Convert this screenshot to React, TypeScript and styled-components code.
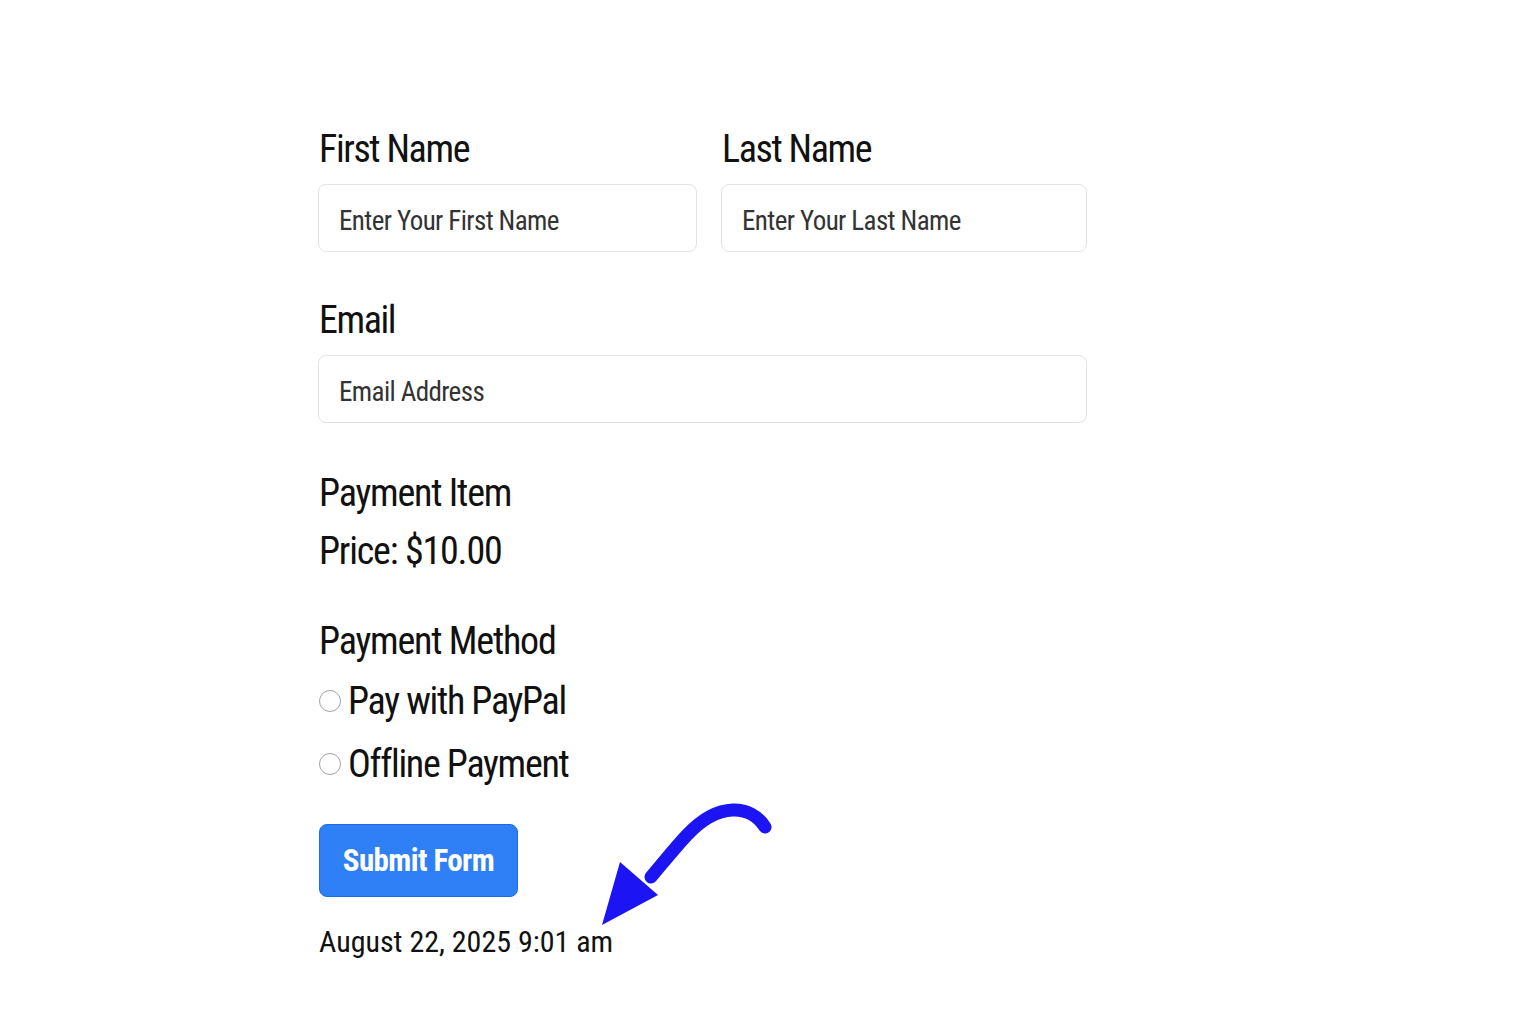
import React from "react";
import styled, { createGlobalStyle } from "styled-components";

const GlobalStyle = createGlobalStyle`
  html, body {
    margin: 0;
    padding: 0;
    background: #ffffff;
  }
  body {
    font-family: Roboto, "Liberation Sans", sans-serif;
    font-stretch: 75%;
    color: #111111;
  }
`;

const App = () => {
  return (
    <>
      <GlobalStyle />
      <Page>
        <Form onSubmit={(e) => e.preventDefault()}>
          <NameRow>
            <Field>
              <Label htmlFor="first">First Name</Label>
              <Input id="first" placeholder="Enter Your First Name" />
            </Field>
            <Field>
              <Label htmlFor="last">Last Name</Label>
              <Input id="last" placeholder="Enter Your Last Name" />
            </Field>
          </NameRow>
          <Field>
            <Label htmlFor="email">Email</Label>
            <Input id="email" placeholder="Email Address" />
          </Field>
          <ItemBlock>
            <Heading>Payment Item</Heading>
            <Heading>Price: $10.00</Heading>
          </ItemBlock>
          <MethodBlock>
            <Heading>Payment Method</Heading>
            <RadioList>
              <RadioRow>
                <Radio type="radio" name="method" />
                <span>Pay with PayPal</span>
              </RadioRow>
              <RadioRow>
                <Radio type="radio" name="method" />
                <span>Offline Payment</span>
              </RadioRow>
            </RadioList>
          </MethodBlock>
          <SubmitButton type="submit">Submit Form</SubmitButton>
          <Stamp>
            August 22, 2025 9:01 am
            <Arrow viewBox="0 0 180 130" width="180" height="130">
              <path
                d="M164 32 C150 10, 118 6, 86 40 C72 55, 62 68, 50 82"
                fill="none"
                stroke="#1c14f2"
                strokeWidth="13"
                strokeLinecap="round"
              />
              <polygon points="19,67 57,100 1,130" fill="#1c14f2" />
            </Arrow>
          </Stamp>
        </Form>
      </Page>
    </>
  );
};

const Page = styled.div`
  width: 1536px;
  min-height: 1024px;
  padding: 127px 0 0 318px;
  box-sizing: border-box;
`;

const Form = styled.form`
  width: 769px;
  display: flex;
  flex-direction: column;
`;

const NameRow = styled.div`
  display: grid;
  grid-template-columns: 379px 366px;
  column-gap: 24px;
  margin-bottom: 46px;
`;

const Field = styled.div`
  display: flex;
  flex-direction: column;
`;

const Label = styled.label`
  font-size: 38px;
  line-height: 44px;
  letter-spacing: -1.4px;
  padding-left: 1px;
  margin-bottom: 13px;
  color: #111111;
`;

const Input = styled.input`
  height: 68px;
  box-sizing: border-box;
  border: 1px solid #e0e3e7;
  border-radius: 8px;
  padding: 5px 20px 0;
  font-family: inherit;
  font-stretch: 75%;
  font-size: 27px;
  letter-spacing: -0.6px;
  color: #222;
  background: #fff;
  outline: none;

  &::placeholder {
    color: #333333;
    opacity: 1;
  }
`;

const ItemBlock = styled.div`
  margin-top: 48px;
  display: flex;
  flex-direction: column;
  gap: 14px;
`;

const Heading = styled.div`
  font-size: 38px;
  line-height: 44px;
  letter-spacing: -1.2px;
  padding-left: 1px;
  color: #111111;
`;

const MethodBlock = styled.div`
  margin-top: 46px;
  display: flex;
  flex-direction: column;
  gap: 16px;
`;

const RadioList = styled.div`
  display: flex;
  flex-direction: column;
  gap: 19px;
`;

const RadioRow = styled.label`
  display: flex;
  align-items: center;
  gap: 7px;
  font-size: 38px;
  line-height: 44px;
  letter-spacing: -1.3px;
  color: #111111;
`;

const Radio = styled.input`
  appearance: none;
  width: 22px;
  height: 22px;
  margin: 0 0 0 1px;
  border: 1.5px solid #a3a3a3;
  border-radius: 50%;
  background: #fff;
  flex-shrink: 0;
`;

const SubmitButton = styled.button`
  align-self: flex-start;
  margin-top: 38px;
  margin-left: 1px;
  width: 199px;
  height: 73px;
  border: 1px solid #1e6be3;
  border-radius: 8px;
  background: #2f80f6;
  color: #ffffff;
  font-family: inherit;
  font-stretch: 75%;
  font-weight: 700;
  font-size: 31px;
  letter-spacing: -0.6px;
  white-space: nowrap;
  cursor: pointer;
`;

const Stamp = styled.div`
  position: relative;
  align-self: flex-start;
  margin-top: 26px;
  padding-left: 1px;
  font-size: 30px;
  line-height: 38px;
  white-space: nowrap;
  color: #111111;
`;

const Arrow = styled.svg`
  position: absolute;
  left: 283px;
  top: -128px;
  overflow: visible;
`;

export default App;
